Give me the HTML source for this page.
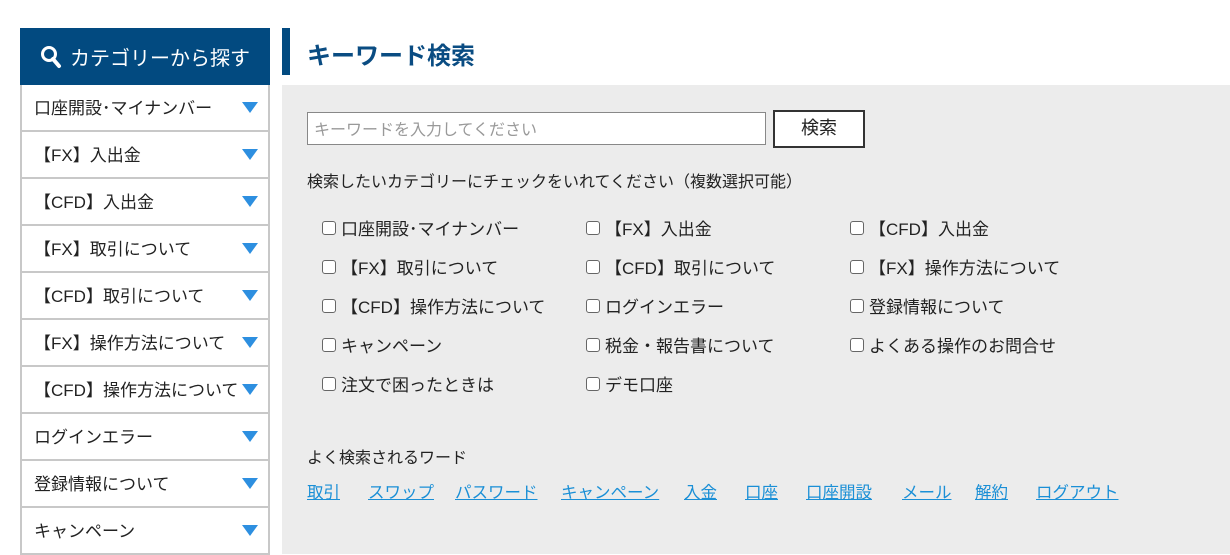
<!DOCTYPE html>
<html><head><meta charset="utf-8"><style>
*{margin:0;padding:0;box-sizing:border-box}
body{width:1230px;height:554px;overflow:hidden;background:#fff;font-family:"Liberation Sans","Noto Sans CJK JP",sans-serif;color:#222;position:relative}
.sb{position:absolute;left:20px;top:28px;width:250px}
.sbh{height:57px;background:#024a80;color:#fff;font-size:20px;display:flex;align-items:center;padding-left:20px}
.sbh svg{margin-right:8px}
.it{height:47px;border:2px solid #c8c8c8;border-top:none;background:#fff;display:flex;align-items:center;padding-left:12px;font-size:17px;position:relative;padding-bottom:3px}
.it:after{content:"";position:absolute;right:10px;top:17px;border-left:8px solid transparent;border-right:8px solid transparent;border-top:11px solid #2d8fe0}
.tbar{position:absolute;left:282px;top:28px;width:8px;height:47px;background:#024a80}
.title{position:absolute;left:307px;top:36px;font-size:24px;font-weight:bold;color:#0a4c82}
.main{position:absolute;left:282px;top:85px;width:948px;height:469px;background:#ececec}
.inp{position:absolute;left:25px;top:27px;width:459px;height:33px;border:1px solid #888;background:#fff;font-size:16px;color:#999;padding:3px 6px}
.btn{position:absolute;left:491px;top:25px;width:92px;height:38px;border:2px solid #333;background:#fff;font-size:18px;text-align:center;line-height:32px}
.lbl{position:absolute;left:25px;top:83px;font-size:16px}
.cb{position:absolute;font-size:17px;display:flex;align-items:center;margin-top:-3px}
.cb i{display:inline-block;width:14px;height:14px;border:1px solid #666;border-radius:3px;background:#fff;margin-right:5px}
.lw{position:absolute;left:25px;top:359px;font-size:16px}
.lk{position:absolute;top:394px;font-size:16.5px;color:#1a8fd6;text-decoration:underline}
</style></head><body>
<div class="sb">
<div class="sbh"><svg width="22" height="24" viewBox="0 0 22 24"><circle cx="9" cy="9" r="6.5" fill="none" stroke="#fff" stroke-width="3"/><path d="M13 14l6 7" stroke="#fff" stroke-width="4" stroke-linecap="round"/></svg>カテゴリーから探す</div>
<div class="it">口座開設･マイナンバー</div>
<div class="it">【FX】入出金</div>
<div class="it">【CFD】入出金</div>
<div class="it">【FX】取引について</div>
<div class="it">【CFD】取引について</div>
<div class="it">【FX】操作方法について</div>
<div class="it">【CFD】操作方法について</div>
<div class="it">ログインエラー</div>
<div class="it">登録情報について</div>
<div class="it">キャンペーン</div>
</div>
<div class="tbar"></div>
<div class="title">キーワード検索</div>
<div class="main">
<div class="inp">キーワードを入力してください</div>
<div class="btn">検索</div>
<div class="lbl">検索したいカテゴリーにチェックをいれてください（複数選択可能）</div>
<div class="cb" style="left:40px;top:133px"><i></i>口座開設･マイナンバー</div>
<div class="cb" style="left:304px;top:133px"><i></i>【FX】入出金</div>
<div class="cb" style="left:568px;top:133px"><i></i>【CFD】入出金</div>
<div class="cb" style="left:40px;top:172px"><i></i>【FX】取引について</div>
<div class="cb" style="left:304px;top:172px"><i></i>【CFD】取引について</div>
<div class="cb" style="left:568px;top:172px"><i></i>【FX】操作方法について</div>
<div class="cb" style="left:40px;top:211px"><i></i>【CFD】操作方法について</div>
<div class="cb" style="left:304px;top:211px"><i></i>ログインエラー</div>
<div class="cb" style="left:568px;top:211px"><i></i>登録情報について</div>
<div class="cb" style="left:40px;top:250px"><i></i>キャンペーン</div>
<div class="cb" style="left:304px;top:250px"><i></i>税金・報告書について</div>
<div class="cb" style="left:568px;top:250px"><i></i>よくある操作のお問合せ</div>
<div class="cb" style="left:40px;top:289px"><i></i>注文で困ったときは</div>
<div class="cb" style="left:304px;top:289px"><i></i>デモ口座</div>
<div class="lw">よく検索されるワード</div>
<span class="lk" style="left:25px">取引</span>
<span class="lk" style="left:86px">スワップ</span>
<span class="lk" style="left:173px">パスワード</span>
<span class="lk" style="left:279px">キャンペーン</span>
<span class="lk" style="left:402px">入金</span>
<span class="lk" style="left:463px">口座</span>
<span class="lk" style="left:524px">口座開設</span>
<span class="lk" style="left:620px">メール</span>
<span class="lk" style="left:693px">解約</span>
<span class="lk" style="left:754px">ログアウト</span>
</div>
</body></html>
